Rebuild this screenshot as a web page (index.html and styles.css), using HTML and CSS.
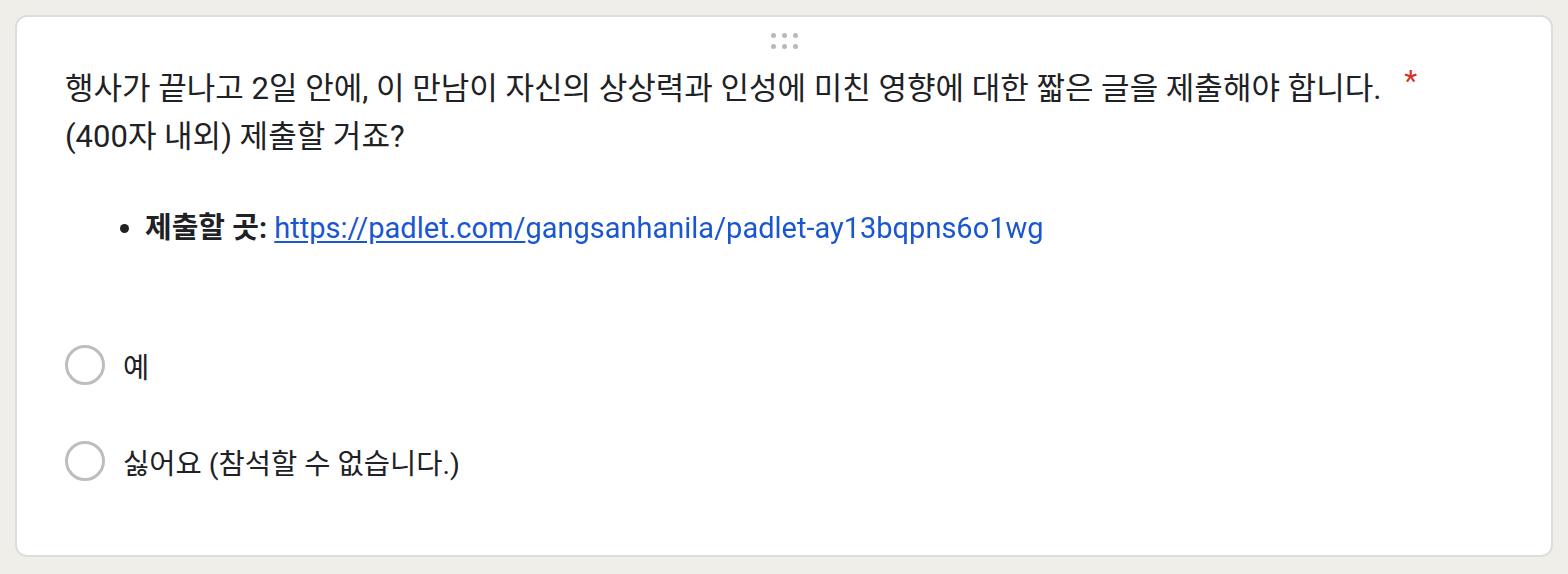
FILE: index.html
```html
<!DOCTYPE html>
<html lang="ko">
<head>
<meta charset="utf-8">
<title>질문</title>
<link rel="stylesheet" href="styles.css">
</head>
<body>
<div class="card">
  <div class="drag-handle" aria-hidden="true">
    <span class="dot"></span><span class="dot"></span><span class="dot"></span>
    <span class="dot"></span><span class="dot"></span><span class="dot"></span>
  </div>
  <div class="title-row">
    <div class="title-text">행사가 끝나고 2일 안에, 이 만남이 자신의 상상력과 인성에 미친 영향에 대한 짧은 글을 제출해야 합니다.<br>(400자 내외) 제출할 거죠?</div>
    <span class="required">*</span>
  </div>
  <ul class="details">
    <li><strong>제출할 곳:</strong> <a class="link" href="#">https://padlet.com/</a><span class="redacted">gangsanhanila/padlet-ay13bqpns6o1wg</span></li>
  </ul>
  <div class="options">
    <label class="option"><span class="radio"></span><span class="option-text">예</span></label>
    <label class="option"><span class="radio"></span><span class="option-text">싫어요 (참석할 수 없습니다.)</span></label>
  </div>
</div>
</body>
</html>
```
FILE: styles.css
```css
* { box-sizing: border-box; }
html, body { margin: 0; }
body {
  background: #efeee9;
  padding: 15px;
  font-family: Roboto, "Noto Sans CJK KR", sans-serif;
  color: #202124;
}
.card {
  background: #fff;
  border: 2px solid #dddde0;
  border-radius: 12px;
  height: 542px;
  padding: 0 48px;
}
.drag-handle {
  width: 27px;
  margin: 16px auto 0;
  display: grid;
  grid-template-columns: repeat(3, 5px);
  column-gap: 6px;
  row-gap: 6px;
}
.dot {
  width: 5px;
  height: 5px;
  border-radius: 50%;
  background: #b9b9b9;
}
.title-row {
  display: flex;
  align-items: flex-start;
  margin-top: 16px;
}
.title-text {
  font-size: 31px;
  line-height: 48px;
}
.required {
  color: #d93025;
  font-size: 30px;
  line-height: 32px;
  padding-left: 23px;
}
.details {
  margin: 43px 0 0;
  padding-left: 80px;
  font-size: 29px;
  line-height: 48px;
}
.details strong { font-weight: 700; }
.link {
  color: #1a56cf;
  text-decoration: underline;
  text-underline-offset: 3px;
}
.redacted {
  color: #1a56cf;
  filter: blur(0.5px);
}
.options {
  margin-top: 89px;
  display: flex;
  flex-direction: column;
  gap: 48px;
}
.option {
  display: flex;
  align-items: center;
  height: 48px;
  gap: 18px;
}
.radio {
  width: 40px;
  height: 40px;
  border: 3px solid #bdbdbd;
  border-radius: 50%;
  flex: none;
}
.option-text {
  font-size: 28.5px;
}
```
